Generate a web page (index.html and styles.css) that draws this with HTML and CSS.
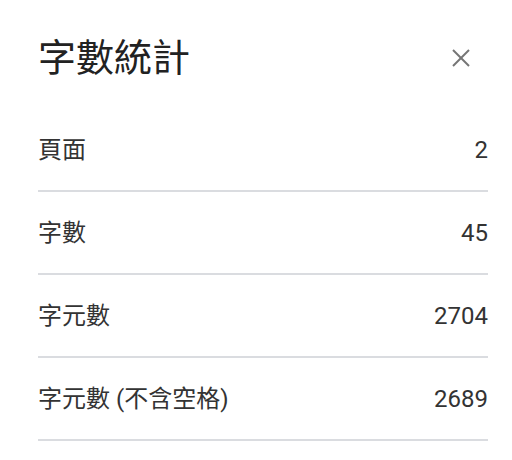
FILE: index.html
```html
<!DOCTYPE html>
<html lang="zh-Hant">
<head>
    <meta charset="UTF-8">
    <title>字數統計</title>
    <link rel="stylesheet" href="styles.css">
</head>
<body>
    <div class="dialog">
        <div class="header">
            <h1 class="title">字數統計</h1>
            <button class="close" aria-label="關閉">
                <svg width="18" height="18" viewBox="0 0 18 18">
                    <line x1="1" y1="1" x2="17" y2="17"></line>
                    <line x1="17" y1="1" x2="1" y2="17"></line>
                </svg>
            </button>
        </div>
        <div class="row">
            <span class="label">頁面</span>
            <span class="value">2</span>
        </div>
        <div class="row">
            <span class="label">字數</span>
            <span class="value">45</span>
        </div>
        <div class="row">
            <span class="label">字元數</span>
            <span class="value">2704</span>
        </div>
        <div class="row">
            <span class="label">字元數 (不含空格)</span>
            <span class="value">2689</span>
        </div>
    </div>
</body>
</html>
```

FILE: styles.css
```css
body {
    margin: 0;
    padding: 0;
    background-color: #fff;
    font-family: Roboto, "Noto Sans CJK TC", sans-serif;
    color: #333;
}

.dialog {
    width: 512px;
    height: 460px;
    box-sizing: border-box;
    padding: 0 24px 0 38px;
}

.header {
    display: flex;
    justify-content: space-between;
    align-items: center;
    height: 109px;
    padding-top: 6px;
    box-sizing: border-box;
}

.title {
    margin: 0;
    font-size: 38px;
    font-weight: 400;
    line-height: 46px;
    color: #222;
}

.close {
    display: flex;
    padding: 0;
    margin-right: 18px;
    border: none;
    background: none;
    cursor: pointer;
}

.close line {
    stroke: #757575;
    stroke-width: 2;
}

.row {
    display: flex;
    justify-content: space-between;
    align-items: center;
    padding: 25px 0 24px;
    font-size: 24px;
    line-height: 32px;
    border-bottom: 2px solid #dadce0;
}
```
